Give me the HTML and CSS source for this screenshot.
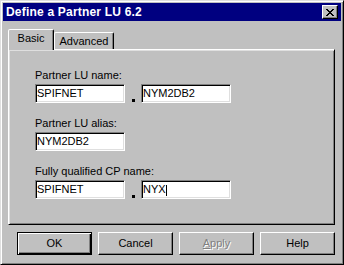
FILE: index.html
```html
<!DOCTYPE html>
<html lang="en">
<head>
    <meta charset="UTF-8">
    <title>Define a Partner LU 6.2</title>
    <link rel="stylesheet" href="styles.css">
</head>
<body>

    <!-- Dialog window -->
    <div class="window">
        <div class="titlebar">
            <span class="title">Define a Partner LU 6.2</span>
            <button class="close" type="button">
                <svg width="8" height="7" viewBox="0 0 8 7" shape-rendering="crispEdges">
                    <path d="M0 0h2v1H0z M6 0h2v1H6z M1 1h2v1H1z M5 1h2v1H5z M2 2h4v1H2z M3 3h2v1H3z M2 4h4v1H2z M1 5h2v1H1z M5 5h2v1H5z M0 6h2v1H0z M6 6h2v1H6z" fill="#000"/>
                </svg>
            </button>
        </div>

        <div class="content">
            <!-- Tabs -->
            <div class="tabs">
                <div class="tab active">Basic</div>
                <div class="tab wide">Advanced</div>
            </div>

            <!-- Basic page -->
            <div class="panel">
                <div class="field">
                    <label>Partner LU name:</label>
                    <div class="row">
                        <span class="textbox">SPIFNET</span>
                        <span class="dot"></span>
                        <span class="textbox">NYM2DB2</span>
                    </div>
                </div>

                <div class="field">
                    <label>Partner LU alias:</label>
                    <div class="row">
                        <span class="textbox">NYM2DB2</span>
                    </div>
                </div>

                <div class="field">
                    <label>Fully qualified CP name:</label>
                    <div class="row">
                        <span class="textbox">SPIFNET</span>
                        <span class="dot"></span>
                        <span class="textbox">NYX<span class="caret"></span></span>
                    </div>
                </div>
            </div>

            <!-- Dialog buttons -->
            <div class="buttons">
                <button class="btn default" type="button">OK</button>
                <button class="btn" type="button">Cancel</button>
                <button class="btn" type="button" disabled><u>A</u>pply</button>
                <button class="btn" type="button">Help</button>
            </div>
        </div>
    </div>

</body>
</html>
```

FILE: styles.css
```css
/* General styling */
* {
    box-sizing: border-box;
}

body {
    margin: 0;
    background-color: #c0c0c0;
    font-family: "Liberation Sans", Arial, sans-serif;
    font-size: 11px;
    color: #000;
}

/* Window frame */
.window {
    width: 344px;
    height: 265px;
    padding: 2px;
    background-color: #c0c0c0;
    border: 1px solid;
    border-color: #dfdfdf #000 #000 #dfdfdf;
    box-shadow: inset 1px 1px #fff, inset -1px -1px #808080;
}

/* Title bar */
.titlebar {
    display: flex;
    align-items: center;
    height: 18px;
    padding: 0 3px 0 3px;
    background-color: #000080;
    color: #fff;
}

.title {
    font-size: 12px;
    font-weight: bold;
    letter-spacing: 0.2px;
    line-height: 18px;
}

.close {
    display: flex;
    align-items: center;
    justify-content: center;
    width: 16px;
    height: 14px;
    margin-left: auto;
    padding: 0;
    background-color: #c0c0c0;
    border: 1px solid;
    border-color: #fff #000 #000 #fff;
    box-shadow: inset -1px -1px #808080;
}

/* Dialog body */
.content {
    padding: 8px 6px 0 5px;
}

/* Tabs */
.tabs {
    display: flex;
    align-items: flex-end;
    height: 20px;
}

.tab {
    width: 46px;
    height: 17px;
    padding-top: 2px;
    text-align: center;
    line-height: 13px;
    border: 1px solid;
    border-bottom: none;
    border-color: #fff #000 transparent #fff;
    border-radius: 2px 2px 0 0;
    box-shadow: inset -1px 0 #808080;
}

.tab.wide {
    width: 60px;
}

.tab.active {
    position: relative;
    z-index: 1;
    height: 21px;
    margin-bottom: -1px;
    background-color: #c0c0c0;
}

/* Tab page */
.panel {
    height: 176px;
    padding: 19px 0 0 26px;
    border: 1px solid;
    border-color: #fff #000 #000 #fff;
    box-shadow: inset 1px 1px #dfdfdf, inset -1px -1px #808080;
}

.field {
    margin-bottom: 14px;
}

.field label {
    display: block;
    line-height: 13px;
    margin-bottom: 2px;
}

.row {
    display: flex;
    align-items: flex-end;
}

.textbox {
    width: 90px;
    height: 19px;
    padding: 0 1px;
    line-height: 17px;
    background-color: #fff;
    border: 1px solid;
    border-color: #808080 #fff #fff #808080;
    box-shadow: inset 1px 1px #000, inset -1px -1px #dfdfdf;
    white-space: nowrap;
}

.dot {
    width: 3px;
    height: 3px;
    margin: 0 6px 1px 7px;
    background-color: #000;
}

.caret {
    display: inline-block;
    width: 1px;
    height: 11px;
    vertical-align: -3px;
    background-color: #000;
}

/* Buttons */
.buttons {
    display: flex;
    justify-content: flex-end;
    gap: 6px;
    margin-top: 7px;
}

.btn {
    width: 75px;
    height: 23px;
    padding: 0;
    font-family: "Liberation Sans", Arial, sans-serif;
    font-size: 11px;
    line-height: 21px;
    color: #000;
    background-color: #c0c0c0;
    border: 1px solid;
    border-color: #fff #000 #000 #fff;
    box-shadow: inset -1px -1px #808080;
}

.btn.default {
    border-color: #000;
    box-shadow: inset 1px 1px #fff, inset -1px -1px #000, inset -2px -2px #808080;
}

.btn:disabled {
    color: #808080;
    text-shadow: 1px 1px 0 #fff;
}
```
